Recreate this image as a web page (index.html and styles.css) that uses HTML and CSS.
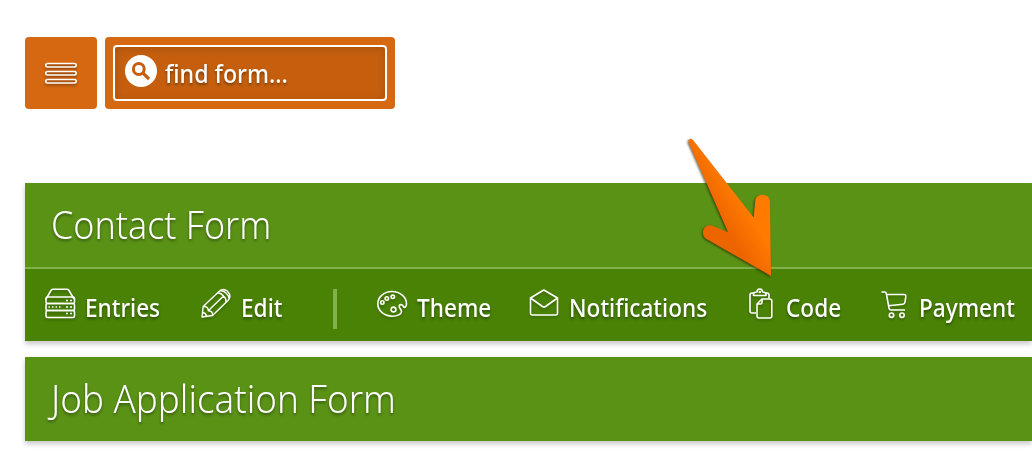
FILE: index.html
```html
<!DOCTYPE html>
<html lang="en">
<head>
    <meta charset="UTF-8">
    <meta name="viewport" content="width=device-width, initial-scale=1.0">
    <title>Forms</title>
    <link rel="stylesheet" href="styles.css">
</head>
<body>
    <header class="toolbar">
        <button class="menu-button" aria-label="Menu">
            <svg width="34" height="24" viewBox="0 0 34 24">
                <rect x="1.800" y="2.500" width="30.400" height="3.500" rx="1.700"/>
                <rect x="1.800" y="10.500" width="30.400" height="3.500" rx="1.700"/>
                <rect x="1.800" y="18.500" width="30.400" height="3.500" rx="1.700"/>
            </svg>
        </button>
        <div class="search">
            <div class="search-field">
                <svg width="32" height="32" viewBox="0 0 32 32">
                    <circle cx="16" cy="16" r="16" fill="#fff"/>
                    <circle cx="13.800" cy="14" r="5.400" fill="none" stroke="#c55f0e" stroke-width="3"/>
                    <path d="M17.800 17.800L24 24" stroke="#c55f0e" stroke-width="3.200"/>
                </svg>
                <span class="search-text">find form...</span>
            </div>
        </div>
    </header>

    <main class="forms">
        <section class="form-card">
            <h2><span class="title-contact">Contact Form</span></h2>
            <nav class="actions">
                <a class="action entries">
                    <svg class="icon" width="32" height="32" viewBox="0 0 32 32">
                        <path d="M1 11L6 2.500Q6.500 1.200 8 1.200H22Q23.500 1.200 24 2.500L29 11"/>
                        <rect x="1" y="9" width="28.500" height="6.500" rx="1.500"/>
                        <rect x="1" y="15.500" width="28.500" height="7" rx="1.500"/>
                        <rect x="1" y="22.500" width="28.500" height="7" rx="1.500"/>
                        <path class="dots" d="M21 12.500h2m2 0h2M21 19h2m2 0h2M21 25.500h2m2 0h2M3.500 19h1.500m2 0h1.500m2 0h1.500m2 0h1.500"/>
                    </svg>
                    <span class="label">Entries</span>
                </a>
                <a class="action edit">
                    <svg class="icon" width="32" height="32" viewBox="0 0 32 32">
                        <path d="M1 29L2.200 18.500L18 3.500Q22-.5 26.500 3.200Q31 8 27 12.500L11.500 27.500Z"/>
                        <path d="M2.200 18.500Q7 18 7.300 22.800Q12 23 11.500 27.500M7.300 22.800L22.500 8M16.500 5Q20 4.500 22.500 8Q25.500 10.500 25 14M19.500 2.500Q23.500 3 25.500 5.500Q28 8 28 10.500M1.600 24.500Q5 25 5.500 28.200"/>
                    </svg>
                    <span class="label">Edit</span>
                </a>
                <i class="divider"></i>
                <a class="action theme">
                    <svg class="icon" width="32" height="32" viewBox="0 0 32 32">
                        <path d="M15 3.500C7 3.500.8 9 .8 16C.8 23 7.500 28.200 15 28.200C20.500 28.200 24.500 26.200 24.500 23.500C24.500 21 22.200 20.500 22.200 18.500C22.200 16 25 16 26.500 18.500C27.500 20 29.500 19.500 29.500 16C29.500 9 23 3.500 15 3.500Z"/>
                        <circle cx="5.300" cy="14.500" r="1.700"/>
                        <circle cx="9.800" cy="10.500" r="1.700"/>
                        <circle cx="15.800" cy="8.800" r="1.700"/>
                        <circle cx="16.500" cy="21.500" r="2.400"/>
                    </svg>
                    <span class="label">Theme</span>
                </a>
                <a class="action notifications">
                    <svg class="icon" width="32" height="32" viewBox="0 0 32 32">
                        <path d="M1.500 10L14.800 2L28.500 10V25Q28.500 27 26.500 27H3.500Q1.500 27 1.500 25ZM1.500 10L13.500 18.500Q15 19.500 16.500 18.500L28.500 10"/>
                    </svg>
                    <span class="label">Notifications</span>
                </a>
                <a class="action code">
                    <svg class="icon" width="32" height="32" viewBox="0 0 32 32">
                        <path d="M7 25H3Q1 25 1 23V7Q1 5 3 5H4.500M17 5H18Q20 5 20 7V10.500M4.500 7.500Q4 4 8 4Q8 1 10.800 1Q13.500 1 13.500 4Q17.500 4 17 7.500Z"/>
                        <path d="M13 11H20.500Q22.800 11 22.800 13V28Q22.800 30 20.800 30H10Q8 30 8 28V16ZM8 16H11.500Q13 16 13 14.500V11"/>
                        <circle cx="10.800" cy="4" r=".5"/>
                    </svg>
                    <span class="label">Code</span>
                </a>
                <a class="action payment">
                    <svg class="icon" width="32" height="32" viewBox="0 0 32 32">
                        <path d="M.5 4H3.500Q5 4 5.300 5.500L8 20Q8.200 22 10 22H24M5.500 6.500H23Q25 6.500 24.800 8.500L24 14Q23.800 16 22 16.200L7.300 17.700"/>
                        <circle cx="10.500" cy="27.200" r="2.200"/>
                        <circle cx="21" cy="27.200" r="2.200"/>
                    </svg>
                    <span class="label">Payment</span>
                </a>
            </nav>
        </section>
        <section class="form-card">
            <h2><span class="title-job">Job Application Form</span></h2>
        </section>
    </main>

    <!-- arrow over the Code action -->
    <svg class="pointer" width="100" height="150" viewBox="0 0 100 150">
        <defs>
            <linearGradient id="arrowFill" gradientUnits="userSpaceOnUse" x1="43" y1="94" x2="67" y2="79">
                <stop offset="0" stop-color="#ed6500"/>
                <stop offset="1" stop-color="#ff7b00"/>
            </linearGradient>
        </defs>
        <path fill="url(#arrowFill)" d="M8.700 12.500C7.500 9 11 7.500 13 10L73.700 87.500L75.200 71C75.500 62.500 89.500 62.500 90 71L91 146L26.500 109C19 104 24.500 92.500 33 96L48 102Z"/>
    </svg>
</body>
</html>
```
FILE: styles.css
```css
body {
    margin: 0;
    height: 454px;
    box-sizing: border-box;
    padding: 37px 0 0 25px;
    overflow: hidden;
    background: #fff;
    color: #fff;
    font-family: "Noto Sans", "Open Sans", sans-serif;
}

.toolbar {
    display: flex;
    gap: 8px;
    height: 72px;
    margin-bottom: 74px;
}

.menu-button {
    display: flex;
    align-items: center;
    justify-content: center;
    width: 72px;
    padding: 0;
    border: 0;
    border-radius: 4px;
    background: #d56810;
}

.menu-button svg {
    fill: #a9500b;
    stroke: #fff;
    stroke-width: 1.6;
    filter: drop-shadow(0 2px 1px rgba(0, 0, 0, 0.25));
}

.search {
    box-sizing: border-box;
    width: 290px;
    padding: 8px;
    border-radius: 4px;
    background: #d56810;
}

.search-field {
    display: flex;
    gap: 8px;
    box-sizing: border-box;
    height: 56px;
    padding: 8px 10px;
    border: 2px solid #fff;
    border-radius: 4px;
    background: #c55f0e;
    box-shadow: inset 0 2px 8px rgba(0, 0, 0, 0.14);
}

.search-text {
    font-size: 25px;
    font-weight: 500;
    line-height: 36px;
    text-shadow: 0 2px 3px rgba(0, 0, 0, 0.4);
    white-space: nowrap;
    transform: scaleX(0.93);
    transform-origin: left;
}

.forms {
    display: flex;
    flex-direction: column;
    gap: 16px;
}

.form-card {
    background: #5a9216;
    box-shadow: 0 3px 5px rgba(0, 0, 0, 0.22);
}

.form-card h2 {
    height: 84px;
    margin: 0;
    padding-left: 26px;
    font-size: 38px;
    font-weight: 300;
    line-height: 83px;
    text-shadow: 0 2px 3px rgba(0, 0, 0, 0.4);
    white-space: nowrap;
}

.title-contact,
.title-job {
    display: inline-block;
    transform: scaleX(0.943);
    transform-origin: left;
}

.title-job {
    transform: scaleX(0.967);
}

.actions {
    display: flex;
    height: 72px;
    padding-left: 20px;
    border-top: 2px solid #82b04b;
    background: #498205;
}

.action {
    display: flex;
    flex: none;
    font-size: 25px;
    font-weight: 500;
    line-height: 77px;
    text-shadow: 0 2px 3px rgba(0, 0, 0, 0.4);
    white-space: nowrap;
}

.label {
    transform: scaleX(0.905);
    transform-origin: left;
}

.icon {
    flex: none;
    margin: 19px 8px 0 0;
    fill: none;
    stroke: #fff;
    stroke-width: 1.6;
    stroke-linejoin: round;
    filter: drop-shadow(0 2px 1px rgba(0, 0, 0, 0.2));
}

.icon .dots {
    stroke-width: 1.5;
}

.entries {
    width: 156px;
}

.edit {
    width: 132px;
}

.edit .icon {
    stroke-width: 1.4;
}

.divider {
    flex: none;
    width: 4px;
    height: 40px;
    margin: 20px 40px 0 0;
    background: #82b04b;
}

.theme {
    width: 152px;
}

.notifications {
    width: 220px;
}

.code {
    width: 132px;
}

.code .icon {
    margin-right: 5px;
}

.payment .icon {
    margin-right: 6px;
}

.pointer {
    position: absolute;
    left: 680px;
    top: 130px;
    filter: drop-shadow(-1px 1px 1px rgba(40, 30, 0, 0.65));
}
```
